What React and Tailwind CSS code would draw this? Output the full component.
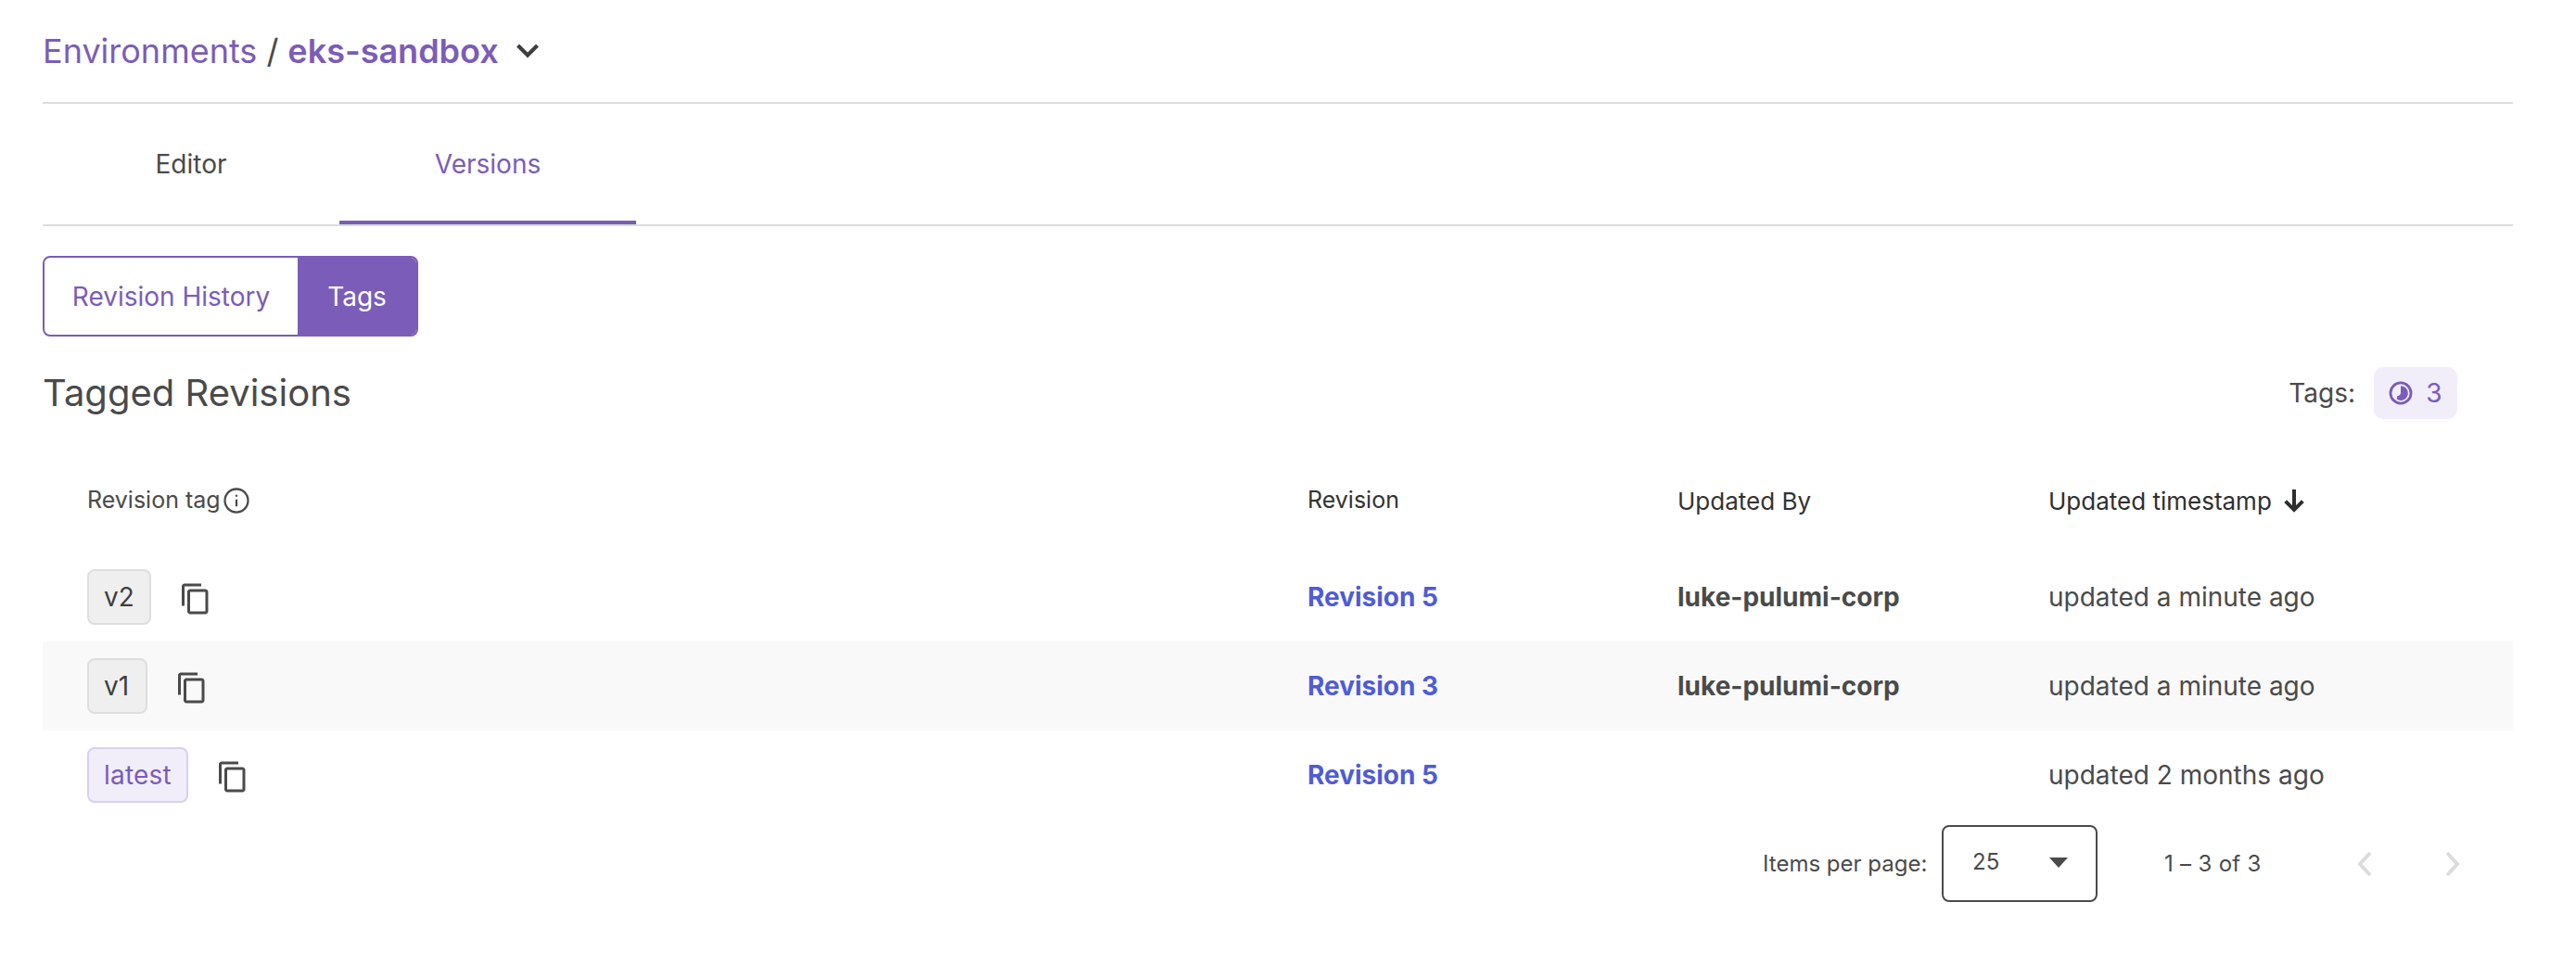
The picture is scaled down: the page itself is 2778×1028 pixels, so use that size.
import React from "react";

const font = { fontFamily: '"Inter", "Noto Sans", sans-serif' };

function CopyIcon() {
  return (
    <svg viewBox="0 0 24 24" className="w-[36px] h-[36px] shrink-0 mt-[3px] fill-[#4a4a4a]">
      <path d="M16 1H4c-1.1 0-2 .9-2 2v14h2V3h12V1zm3 4H8c-1.1 0-2 .9-2 2v14c0 1.1.9 2 2 2h11c1.1 0 2-.9 2-2V7c0-1.1-.9-2-2-2zm0 16H8V7h11v14z" />
    </svg>
  );
}

function Chip({ label, purple, wide }) {
  return (
    <span
      className={
        purple
          ? "h-[60px] px-[16px] flex items-center rounded-[8px] border-2 border-[#d9d0ef] bg-[#f1eefa] text-[#7b5cb9] text-[28px] tracking-[0.2px]"
          : wide
          ? "h-[60px] pl-[16px] pr-[18px] flex items-center rounded-[8px] border-2 border-[#dedede] bg-[#efefef] text-[#3f3f3f] text-[28px]"
          : "h-[60px] px-[16px] flex items-center rounded-[8px] border-2 border-[#dedede] bg-[#efefef] text-[#3f3f3f] text-[28px]"
      }
    >
      {label}
    </span>
  );
}

function Row({ tag, purple, wide, rev, by, time, shaded }) {
  return (
    <div className={shaded ? "grid grid-cols-[1364px_399px_400px_1fr] h-[96px] items-center bg-[#f9f9f9]" : "grid grid-cols-[1364px_399px_400px_1fr] h-[96px] items-center"}>
      <div className="pl-[48px] flex items-center gap-[30px]">
        <Chip label={tag} purple={purple} wide={wide} />
        <CopyIcon />
      </div>
      <a className="text-[28px] font-bold text-[#4f5cd6]">{rev}</a>
      <div className="text-[28px] font-bold text-[#4a4a4a]">{by}</div>
      <div className="text-[28px] text-[#4a4a4a]">{time}</div>
    </div>
  );
}

export default function App() {
  return (
    <div style={font} className="w-[2778px] h-[1028px] bg-white pl-[46px] pr-[68px] text-[#4a4a4a] overflow-hidden">
      <div className="h-[110px] flex items-center text-[36px] gap-[10px]">
        <span className="text-[#7b5cb9]">Environments</span>
        <span>/</span>
        <span className="text-[#7b5cb9] font-semibold">eks-sandbox</span>
        <svg viewBox="0 0 24 24" className="w-[36px] h-[36px] ml-[3px] fill-none stroke-[#3f3f3f] stroke-[2.8]">
          <path d="M5 8l7 7 7-7" />
        </svg>
      </div>
      <div className="border-t-2 border-b-2 border-[#dcdcdc] flex h-[134px]">
        <div className="w-[320px] flex items-center justify-center text-[28px] text-[#4a4a4a]">Editor</div>
        <div className="w-[320px] flex items-center justify-center text-[28px] text-[#7b5cb9] border-b-4 border-[#7b5cb9] pt-[4px]">Versions</div>
      </div>
      <div className="mt-[32px] flex w-[405px] h-[87px] rounded-[8px] border-2 border-[#7b5cb9] overflow-hidden text-[28px]">
        <div className="w-[273px] flex items-center justify-center text-[#7b5cb9]">Revision History</div>
        <div className="flex-1 flex items-center justify-center bg-[#7b5cb9] text-white">Tags</div>
      </div>
      <div className="mt-[33px] flex items-center justify-between h-[56px] pr-[60px]">
        <h1 className="text-[40px] leading-none text-[#4a4a4a]">Tagged Revisions</h1>
        <div className="flex items-center gap-[20px]">
          <span className="text-[28px]">Tags:</span>
          <span className="w-[90px] h-[56px] rounded-[10px] bg-[#f1eefa] flex items-center justify-center gap-[14px] text-[28px] text-[#7b5cb9]">
            <svg viewBox="0 0 24 24" className="w-[26px] h-[26px]">
              <circle cx="12" cy="12" r="10.2" fill="none" stroke="#7b5cb9" strokeWidth="2.6" />
              <path d="M12 4.8A7.2 7.2 0 0 1 19.2 12 7.2 7.2 0 0 1 8 18 L 8.6 15 A 4 4 0 0 0 12 11Z" fill="#7b5cb9" />
            </svg>
            3
          </span>
        </div>
      </div>
      <div className="grid grid-cols-[1364px_399px_400px_1fr] h-[144px] pt-[32px] items-center text-[26px]">
        <div className="pl-[48px] flex items-center text-[25px] text-[#4a4a4a] gap-[2px]">
          Revision tag
          <svg viewBox="0 0 24 24" className="w-[30px] h-[30px] fill-none stroke-[#4a4a4a] stroke-[1.8]">
            <circle cx="12" cy="12" r="10" />
            <path d="M12 11v6M12 7v1.6" />
          </svg>
        </div>
        <div className="text-[25px] text-[#333333]">Revision</div>
        <div className="text-[#333333]">Updated By</div>
        <div className="flex items-center text-[#2f2f2f] gap-[8px]">
          Updated timestamp
          <svg viewBox="0 0 24 24" className="w-[32px] h-[32px] fill-none stroke-[#2f2f2f] stroke-[3]">
            <path d="M12 3v16M5 12.5l7 7 7-7" />
          </svg>
        </div>
      </div>
      <Row tag="v2" rev="Revision 5" by="luke-pulumi-corp" time="updated a minute ago" />
      <Row tag="v1" wide rev="Revision 3" by="luke-pulumi-corp" time="updated a minute ago" shaded />
      <Row tag="latest" purple rev="Revision 5" by="" time="updated 2 months ago" />
      <div className="mt-[6px] flex items-center h-[83px] pl-[1855px] text-[24px]">
        <span className="w-[193px]">Items per page:</span>
        <div className="w-[168px] h-[83px] rounded-[8px] border-2 border-[#4a4a4a] flex items-start pt-[20px] pl-[31px] relative">
          <span className="text-[24px]">25</span>
          <svg viewBox="0 0 20 11" className="absolute left-[114px] top-[33px] w-[20px] h-[11px] fill-[#4a4a4a]">
            <path d="M0 0h20L10 11z" />
          </svg>
        </div>
        <span className="ml-[72px] w-[150px] tracking-[0.3px]">1 – 3 of 3</span>
        <svg viewBox="0 0 24 40" className="w-[24px] h-[40px] ml-[54px] fill-none stroke-[#dcdcdc] stroke-[4]">
          <path d="M18 8L7 20l11 12" />
        </svg>
        <svg viewBox="0 0 24 40" className="w-[24px] h-[40px] ml-[71px] fill-none stroke-[#dcdcdc] stroke-[4]">
          <path d="M6 8l11 12L6 32" />
        </svg>
      </div>
    </div>
  );
}
